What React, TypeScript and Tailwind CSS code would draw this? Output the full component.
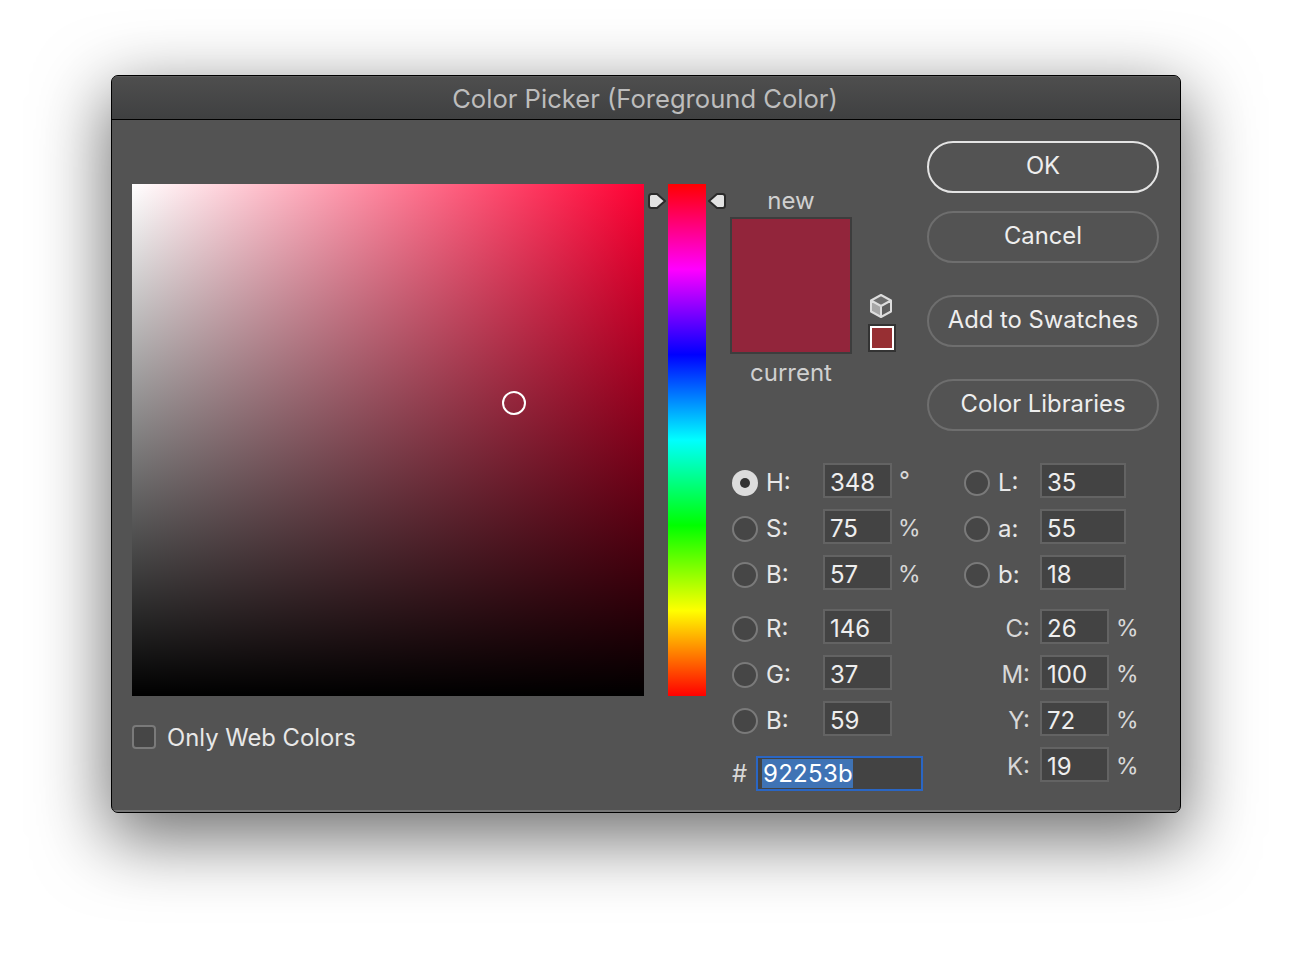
const inputBox = "h-[35px] border-2 border-[#636363] bg-[#434343] pl-[5px] pt-[3px] text-[#eeeeee] leading-[29px]";

function Radio({ checked }: { checked?: boolean }) {
  if (checked) {
    return (
      <span className="mt-[5px] flex h-[26px] w-[26px] shrink-0 items-center justify-center rounded-full bg-[#dcdcdc]">
        <span className="h-[10px] w-[10px] rounded-full bg-[#333333]" />
      </span>
    );
  }
  return <span className="mt-[5px] h-[26px] w-[26px] shrink-0 rounded-full border-2 border-[#7a7a7a] bg-[#464646]" />;
}

function RadioRow({ label, value, unit, checked }: { label: string; value: string; unit?: string; checked?: boolean }) {
  return (
    <div className="flex h-[35px] items-center pl-px">
      <Radio checked={checked} />
      <span className="ml-[8px] mt-[5px] w-[57px] text-[#e8e8e8]">{label}</span>
      <div className={`${inputBox} w-[69px]`}>{value}</div>
      {unit === "°" && <span className="ml-[7px] mt-px text-[#d8d8d8]">{unit}</span>}
      {unit === "%" && <span className="ml-[6px] mt-[3px] text-[23px] text-[#d8d8d8]">{unit}</span>}
    </div>
  );
}

function LabRow({ label, value }: { label: string; value: string }) {
  return (
    <div className="flex h-[35px] items-center">
      <Radio />
      <span className="ml-[8px] mt-[5px] w-[42px] text-[#e8e8e8]">{label}</span>
      <div className={`${inputBox} w-[86px]`}>{value}</div>
    </div>
  );
}

function CmykRow({ label, value }: { label: string; value: string }) {
  return (
    <div className="flex h-[35px] items-center">
      <span className="mt-[5px] w-[76px] pr-[10px] text-right text-[#d8d8d8]">{label}</span>
      <div className={`${inputBox} w-[69px]`}>{value}</div>
      <span className="ml-[7px] mt-[3px] text-[23px] text-[#d8d8d8]">%</span>
    </div>
  );
}

function Pill({ label, primary, className }: { label: string; primary?: boolean; className?: string }) {
  return (
    <div
      className={`flex h-[52px] items-center justify-center rounded-full border-2 pb-[2px] text-[23.8px] text-[#eeeeee] ${
        primary ? "border-[#e4e4e4]" : "border-[#6e6e6e]"
      } ${className ?? ""}`}
    >
      {label}
    </div>
  );
}

function SliderArrow({ flip }: { flip?: boolean }) {
  return (
    <svg width="20" height="18" viewBox="0 0 20 18" className={flip ? "-scale-x-100" : ""}>
      <path
        d="M4.5 2H10l8 7-8 7H4.5Q2 16 2 13.5v-9Q2 2 4.5 2z"
        fill="#e2e2e2"
        stroke="#2a2a2a"
        strokeWidth="2"
        strokeLinejoin="round"
      />
    </svg>
  );
}

function Cube() {
  return (
    <svg width="24" height="26" viewBox="0 0 24 26">
      <path d="M12 2l10 5.5v11L12 24 2 18.5v-11z" fill="#5e5e5e" />
      <path d="M2 7.5l10 5.5v11L2 18.5z" fill="#a6a6a6" />
      <path d="M12 2l10 5.5L12 13 2 7.5z" fill="#6e6e6e" />
      <path
        d="M12 2l10 5.5v11L12 24 2 18.5v-11zM2 7.5L12 13l10-5.5M12 13v11"
        fill="none"
        stroke="#dddddd"
        strokeWidth="2"
        strokeLinejoin="round"
      />
    </svg>
  );
}

export default function App() {
  return (
    <div className="h-[960px] w-[1292px] overflow-hidden bg-white pl-[111px] pt-[75px] font-['Inter',sans-serif] text-[24px]">
      <div className="h-[738px] w-[1070px] overflow-hidden rounded-[7px] border border-black bg-[#535353] shadow-[0_22px_70px_4px_rgba(0,0,0,0.56)]">
        <div className="flex h-[44px] items-center justify-center border-b border-t border-b-black border-t-[#5c5c5c] bg-gradient-to-b from-[#4e4e4e] to-[#3f4041] pr-[2px] pt-[3px] text-[25.6px] text-[#bdbdbd]">
          Color Picker (Foreground Color)
        </div>

        <div className="flex h-[692px] border-b-2 border-[#777777] pl-[20px]">
          <div className="w-[512px] shrink-0 pt-[64px]">
            <div className="relative h-[512px] w-[512px] bg-[linear-gradient(to_top,#000,transparent),linear-gradient(to_right,#fff,#ff0033)]">
              <span className="absolute left-[370px] top-[207px] h-[24px] w-[24px] rounded-full border-2 border-white" />
            </div>
            <div className="mt-[29px] flex h-[24px] items-center">
              <span className="h-[24px] w-[24px] rounded-[4px] border-2 border-[#7a7a7a] bg-[#464646]" />
              <span className="ml-[11px] mt-[2px] text-[23.8px] text-[#e8e8e8]">Only Web Colors</span>
            </div>
          </div>

          <div className="relative ml-[24px] mt-[64px] h-[512px] w-[38px] shrink-0 bg-[linear-gradient(to_bottom,#f00,#f0f,#00f,#0ff,#0f0,#ff0,#f00)]">
            <span className="absolute -left-[21px] top-[8px]">
              <SliderArrow />
            </span>
            <span className="absolute -right-[21px] top-[8px]">
              <SliderArrow flip />
            </span>
          </div>

          <div className="ml-[25px] w-[428px] shrink-0">
            <div className="flex h-[343px] pt-[21px]">
              <div className="flex w-[120px] flex-col items-center pt-[43px]">
                <div className="flex h-[33px] items-center text-[#d0d0d0]">new</div>
                <div className="h-[137px] w-[122px] shrink-0 border-2 border-[#3d3d3d] bg-[#92253b]" />
                <div className="mt-[2px] flex h-[34px] items-center text-[#d0d0d0]">current</div>
              </div>
              <div className="ml-[18px] flex flex-col gap-[5px] pt-[152px]">
                <Cube />
                <div className="-ml-px h-[28px] w-[28px] border-2 border-[#333333] bg-white p-[2px]">
                  <div className="h-full w-full bg-[#972f33]" />
                </div>
              </div>
              <div className="ml-auto w-[232px]">
                <Pill label="OK" primary />
                <Pill label="Cancel" className="mt-[18px]" />
                <Pill label="Add to Swatches" className="mt-[32px]" />
                <Pill label="Color Libraries" className="mt-[32px]" />
              </div>
            </div>

            <div className="flex">
              <div className="w-[233px]">
                <div className="flex flex-col gap-[11px]">
                  <RadioRow label="H:" value="348" unit="°" checked />
                  <RadioRow label="S:" value="75" unit="%" />
                  <RadioRow label="B:" value="57" unit="%" />
                </div>
                <div className="mt-[19px] flex flex-col gap-[11px]">
                  <RadioRow label="R:" value="146" />
                  <RadioRow label="G:" value="37" />
                  <RadioRow label="B:" value="59" />
                </div>
                <div className="mt-[20px] flex h-[35px] items-center pl-px">
                  <span className="w-[24px] text-[#d8d8d8]">#</span>
                  <div className="h-[35px] w-[167px] border-2 border-[#2a66c4] bg-[#434343] pl-[4px] pt-[1px] leading-[29px] tracking-[0.3px] text-white">
                    <span className="inline-block bg-[#3f73b5] pl-px">92253b</span>
                  </div>
                </div>
              </div>
              <div>
                <div className="flex flex-col gap-[11px]">
                  <LabRow label="L:" value="35" />
                  <LabRow label="a:" value="55" />
                  <LabRow label="b:" value="18" />
                </div>
                <div className="mt-[19px] flex flex-col gap-[11px]">
                  <CmykRow label="C:" value="26" />
                  <CmykRow label="M:" value="100" />
                  <CmykRow label="Y:" value="72" />
                  <CmykRow label="K:" value="19" />
                </div>
              </div>
            </div>
          </div>
        </div>
      </div>
    </div>
  );
}
